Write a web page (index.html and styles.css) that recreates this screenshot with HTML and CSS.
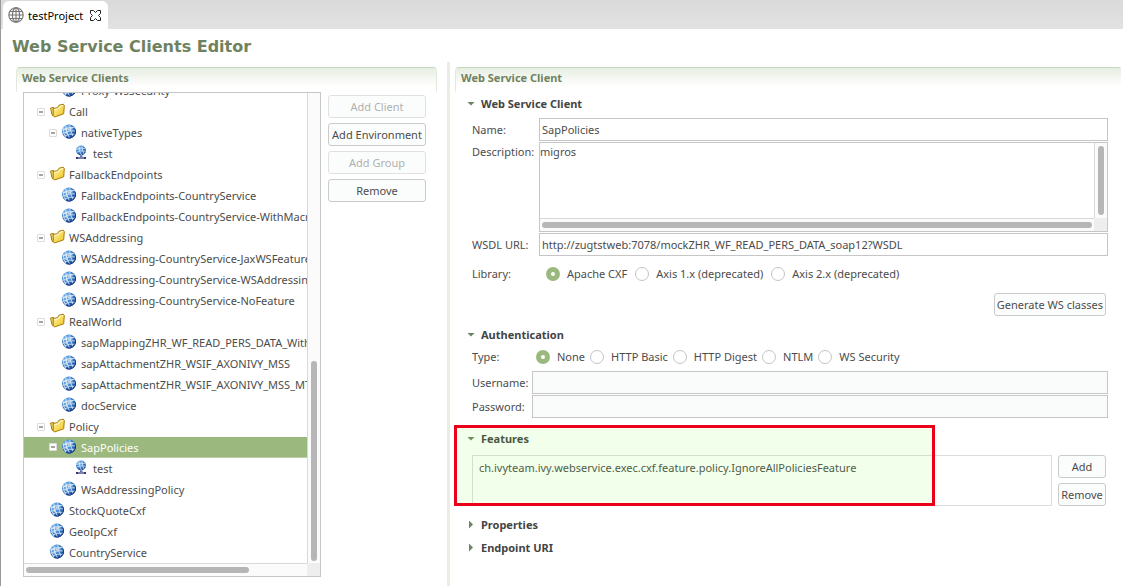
FILE: index.html
```html
<!DOCTYPE html>
<html lang="en">
<head>
<meta charset="utf-8">
<title>Web Service Clients Editor</title>
<link rel="stylesheet" href="styles.css">
</head>
<body>
<svg class="defs" aria-hidden="true">
  <defs>
    <radialGradient id="ball" cx="35%" cy="30%" r="75%">
      <stop offset="0" stop-color="#8fc4f4"/>
      <stop offset=".5" stop-color="#3f86d0"/>
      <stop offset="1" stop-color="#16408f"/>
    </radialGradient>
    <linearGradient id="gold" x1="0" y1="0" x2="1" y2="1">
      <stop offset="0" stop-color="#fff6a8"/>
      <stop offset="1" stop-color="#f0c31c"/>
    </linearGradient>
    <symbol id="globe" viewBox="0 0 15 15">
      <circle cx="7" cy="7.5" r="6.9" fill="url(#ball)"/>
      <g fill="none" stroke="#e8f2fc" stroke-width=".9" opacity=".85">
        <path d="M1 6.200Q5 3 12.100 3.400M.7 9.600Q6 6.200 13.500 6.900M2.100 12.200Q7 9.300 13 10.300M3.800 1.700Q3.800 8 7.500 14M7.700 .8Q8.100 7 11.200 12.800M1.300 4.200Q1.100 9.500 4 13.300"/>
      </g>
      <path d="M2.500 4h2v2h-2zM6 4.500h2v2H6zM3.500 8h2v2h-2zM8.500 3.500h2v2h-2z" fill="#f0efe6" opacity=".65"/>
      <path d="M13.400 5.500A6.700 6.700 0 0 1 4.500 13.700" fill="none" stroke="#143a86" stroke-width="1"/>
    </symbol>
    <symbol id="port" viewBox="0 0 15 15">
      <circle cx="7" cy="5.500" r="4.900" fill="url(#ball)"/>
      <path d="M2.500 4.500Q6.500 2.500 11 3.500M2.500 7.300Q6.500 5 11.700 6.200M5 1.300Q4.800 6 7.500 10M8 1Q8 5 10 9" fill="none" stroke="#e8f2fc" stroke-width=".8" opacity=".85"/>
      <path d="M6 10.500h2.500v1.500h-2.500z" fill="#5f6fa8"/>
      <path d="M2 12h10v2H2z" fill="#34386b"/>
      <path d="M4 13h6" stroke="#c3cbee" stroke-width="1"/>
    </symbol>
    <symbol id="folder" viewBox="0 0 15 15">
      <path d="M.6 5L3.600 4.500V12L3 13 1.800 11z" fill="#f4dc72" stroke="#a87908" stroke-width="1" stroke-linejoin="round"/>
      <path d="M3.200 5.500L7.500 4.700 9 2.200 13.300 1.200 14.300 2.500 13.700 10.800 4.400 14 3.200 12.500z" fill="url(#gold)" stroke="#a87908" stroke-width="1" stroke-linejoin="round"/>
      <path d="M4.300 6.600L8.300 5.800 9.800 3.400 13 2.600" fill="none" stroke="#fffbd5" stroke-width="1"/>
    </symbol>
  </defs>
</svg>

<div class="window">
  <header class="tabs">
    <div class="tab">
      <svg class="tab-icon" viewBox="0 0 16 16" aria-hidden="true"><g fill="none" stroke="#737373" stroke-width="1.1"><circle cx="8" cy="8" r="7.200"/><ellipse cx="8" cy="8" rx="3.600" ry="7.200"/><path d="M8 .8v14.400M1 8h14M2 4.500h12M2 11.500h12"/></g></svg>
      <span>testProject</span>
      <button class="tab-close" aria-label="Close tab"><svg viewBox="0 0 11 11"><path d="M.5.5H3.500l2 2 2-2h3v3l-2 2 2 2v3h-3l-2-2-2 2H.5v-3l2-2-2-2z" fill="#fff" stroke="#222" stroke-width="1"/></svg></button>
    </div>
  </header>
  <h1 class="title">Web Service Clients Editor</h1>

  <main class="panes">
    <section class="pane clients">
      <h2 class="pane-title">Web Service Clients</h2>
      <div class="clients-body">
        <div class="scrollbox tree">
          <ul class="rows">
            <li class="row d1"><i class="toggle none"></i><svg class="icon"><use href="#globe"/></svg>Proxy-WsSecurity</li>
            <li class="row"><i class="toggle"></i><svg class="icon"><use href="#folder"/></svg>Call</li>
            <li class="row d1"><i class="toggle"></i><svg class="icon"><use href="#globe"/></svg>nativeTypes</li>
            <li class="row d2"><i class="toggle none"></i><svg class="icon"><use href="#port"/></svg>test</li>
            <li class="row"><i class="toggle"></i><svg class="icon"><use href="#folder"/></svg>FallbackEndpoints</li>
            <li class="row d1"><i class="toggle none"></i><svg class="icon"><use href="#globe"/></svg>FallbackEndpoints-CountryService</li>
            <li class="row d1"><i class="toggle none"></i><svg class="icon"><use href="#globe"/></svg>FallbackEndpoints-CountryService-WithMacro</li>
            <li class="row"><i class="toggle"></i><svg class="icon"><use href="#folder"/></svg>WSAddressing</li>
            <li class="row d1"><i class="toggle none"></i><svg class="icon"><use href="#globe"/></svg>WSAddressing-CountryService-JaxWSFeature</li>
            <li class="row d1"><i class="toggle none"></i><svg class="icon"><use href="#globe"/></svg>WSAddressing-CountryService-WSAddressing</li>
            <li class="row d1"><i class="toggle none"></i><svg class="icon"><use href="#globe"/></svg>WSAddressing-CountryService-NoFeature</li>
            <li class="row"><i class="toggle"></i><svg class="icon"><use href="#folder"/></svg>RealWorld</li>
            <li class="row d1"><i class="toggle none"></i><svg class="icon"><use href="#globe"/></svg>sapMappingZHR_WF_READ_PERS_DATA_With</li>
            <li class="row d1"><i class="toggle none"></i><svg class="icon"><use href="#globe"/></svg>sapAttachmentZHR_WSIF_AXONIVY_MSS</li>
            <li class="row d1"><i class="toggle none"></i><svg class="icon"><use href="#globe"/></svg>sapAttachmentZHR_WSIF_AXONIVY_MSS_MTOM</li>
            <li class="row d1"><i class="toggle none"></i><svg class="icon"><use href="#globe"/></svg>docService</li>
            <li class="row"><i class="toggle"></i><svg class="icon"><use href="#folder"/></svg>Policy</li>
            <li class="row d1 selected"><i class="toggle"></i><svg class="icon"><use href="#globe"/></svg>SapPolicies</li>
            <li class="row d2"><i class="toggle none"></i><svg class="icon"><use href="#port"/></svg>test</li>
            <li class="row d1"><i class="toggle none"></i><svg class="icon"><use href="#globe"/></svg>WsAddressingPolicy</li>
            <li class="row"><i class="toggle none"></i><svg class="icon"><use href="#globe"/></svg>StockQuoteCxf</li>
            <li class="row"><i class="toggle none"></i><svg class="icon"><use href="#globe"/></svg>GeoIpCxf</li>
            <li class="row"><i class="toggle none"></i><svg class="icon"><use href="#globe"/></svg>CountryService</li>
          </ul>
          <div class="vbar end"><span class="thumb tree-v"></span></div>
          <div class="hbar"><span class="thumb tree-h"></span></div>
          <div class="corner"></div>
        </div>
        <div class="actions">
          <button class="btn" disabled>Add Client</button>
          <button class="btn">Add Environment</button>
          <button class="btn" disabled>Add Group</button>
          <button class="btn">Remove</button>
        </div>
      </div>
    </section>

    <div class="sash"></div>

    <section class="pane client">
      <h2 class="pane-title open">Web Service Client</h2>
      <div class="client-body">
        <h3 class="group"><i class="arrow"></i>Web Service Client</h3>
        <div class="form">
          <label for="name">Name:</label>
          <input class="field" id="name" type="text" value="SapPolicies">
          <label class="top" for="desc">Description:</label>
          <div class="scrollbox desc">
            <textarea id="desc">migros</textarea>
            <div class="vbar"><span class="thumb"></span></div>
            <div class="hbar"><span class="thumb"></span></div>
            <div class="corner"></div>
          </div>
          <label for="wsdl">WSDL URL:</label>
          <input class="field" id="wsdl" type="text" value="http://zugtstweb:7078/mockZHR_WF_READ_PERS_DATA_soap12?WSDL">
        </div>
        <div class="form library" role="radiogroup" aria-label="Library">
          <span>Library:</span>
          <div class="radios wide">
            <label><input type="radio" name="lib" checked>Apache CXF</label>
            <label><input type="radio" name="lib">Axis 1.x (deprecated)</label>
            <label><input type="radio" name="lib">Axis 2.x (deprecated)</label>
          </div>
        </div>
        <div class="generate"><button class="btn">Generate WS classes</button></div>

        <h3 class="group auth-title"><i class="arrow"></i>Authentication</h3>
        <div class="form auth">
          <span>Type:</span>
          <div class="radios" role="radiogroup" aria-label="Type">
            <label><input type="radio" name="type" checked>None</label>
            <label><input type="radio" name="type">HTTP Basic</label>
            <label><input type="radio" name="type">HTTP Digest</label>
            <label><input type="radio" name="type">NTLM</label>
            <label><input type="radio" name="type">WS Security</label>
          </div>
          <label for="user">Username:</label>
          <input class="field off" id="user" type="text" disabled>
          <label for="pass">Password:</label>
          <input class="field off" id="pass" type="password" disabled>
        </div>

        <div class="features">
          <h3 class="group"><i class="arrow"></i>Features</h3>
          <div class="features-body">
            <div class="list">ch.ivyteam.ivy.webservice.exec.cxf.feature.policy.IgnoreAllPoliciesFeature</div>
            <div class="list-actions">
              <button class="btn">Add</button>
              <button class="btn">Remove</button>
            </div>
          </div>
          <div class="highlight"></div>
        </div>
        <h3 class="group properties"><i class="arrow closed"></i>Properties</h3>
        <h3 class="group"><i class="arrow closed"></i>Endpoint URI</h3>
      </div>
    </section>
  </main>
</div>
</body>
</html>
```
FILE: styles.css
```css
* { box-sizing: border-box; }
body {
  margin: 0;
  font: 11px/15px "Noto Sans", sans-serif;
  color: #4c4c4c;
  background: #fff;
}
h1, h2, h3, ul { margin: 0; padding: 0; }
button, input, textarea { font: inherit; color: inherit; }
.defs { position: absolute; width: 0; height: 0; }

.window {
  height: 100vh;
  min-height: 586px;
  display: flex;
  flex-direction: column;
  border-left: 1px solid #999;
  overflow: hidden;
}
.tabs {
  display: flex;
  height: 29px;
  padding: 1px 0 0 2px;
  background: linear-gradient(#dadada, #e2e2e2);
}
.tab {
  display: flex;
  align-items: center;
  gap: 4px;
  padding: 0 7px 0 5px;
  color: #000;
  background: #fff;
  border-radius: 6px 6px 0 0;
}
.tab-icon { width: 16px; height: 16px; }
.tab-close { width: 11px; height: 11px; margin-left: 3px; padding: 0; border: 0; background: none; display: flex; }
.tab-close svg { width: 11px; height: 11px; }
.title {
  padding: 8px 11px 0;
  font: bold 16px/20px "DejaVu Sans", sans-serif;
  color: #6f8260;
}

.panes { flex: 1; min-height: 0; display: flex; margin-top: 5px; }
.pane { padding-top: 5px; display: flex; flex-direction: column; }
.clients { width: 436px; padding-left: 15px; }
.client { flex: 1; min-width: 0; padding: 5px 1px 0 5px; }
.sash { width: 3px; margin-left: 10px; background: #e9ede3; }
.pane-title {
  height: 25px;
  padding: 2px 5px;
  font-size: 11px;
  line-height: 15px;
  color: #6f8260;
  border: 1px solid;
  border-color: #c9d5bb #e3eadc transparent;
  border-radius: 4px 4px 0 0;
  background: linear-gradient(#e7eee2, #fff 80%);
  background-clip: padding-box;
}
.pane-title.open { border-right-color: transparent; }

.clients-body { flex: 1; min-height: 0; display: flex; gap: 7px; padding: 0 0 9px 7px; }
.scrollbox {
  display: grid;
  grid-template: minmax(0, 1fr) 13px / minmax(0, 1fr) 13px;
  border: 1px solid #c6c6c6;
  overflow: hidden;
}
.tree { width: 298px; }
.rows { list-style: none; overflow: hidden; }
.row:first-child { margin-top: -13px; }
.row {
  display: flex;
  align-items: center;
  height: 21px;
  padding-left: 13px;
  white-space: nowrap;
}
.row.d1 { padding-left: 25px; }
.row.d2 { padding-left: 37px; }
.row.selected { color: #fff; background: #9bb97f; border-bottom: 1px solid #b9cda6; }
.toggle {
  flex: none;
  width: 8px;
  height: 8px;
  border: 1px solid #dcdcdc;
  border-radius: 1px;
  background: linear-gradient(#a4a4a4, #a4a4a4) center / 4px 2px no-repeat #fff;
}
.toggle.none { visibility: hidden; }
.icon { flex: none; width: 15px; height: 15px; margin: 0 4px 2px 5px; }

.vbar { border-left: 1px solid #d8d8d8; background: #fbfbfb; padding: 3px; display: flex; }
.vbar.end { align-items: flex-end; padding-bottom: 2px; }
.hbar { border-top: 1px solid #d8d8d8; background: #fbfbfb; padding: 3px 2px; display: flex; }
.corner { background: #eee; }
.thumb { flex: 1; border-radius: 3px; background: #b6b6b6; }
.tree-v { height: 43%; }
.tree-h { flex: 0 0 80%; }

.actions { flex: none; width: 98px; padding-top: 3px; display: flex; flex-direction: column; gap: 5px; }
.btn {
  height: 23px;
  padding: 0 2px;
  border: 1px solid #c8cbc9;
  border-radius: 3px;
  background: #fbfdfc;
  white-space: nowrap;
}
.btn:disabled { color: #b0b0b0; border-color: #dfe2e0; }

.client-body { padding: 4px 14px 0 12px; }
.group {
  display: flex;
  align-items: center;
  gap: 6px;
  height: 15px;
  font-size: 11px;
  line-height: 15px;
  color: #444;
}
.arrow { width: 8px; height: 4px; background: #6f8260; clip-path: polygon(0 0, 100% 0, 50% 100%); }
.arrow.closed { width: 4px; height: 8px; margin: 0 2px; clip-path: polygon(0 0, 100% 50%, 0 100%); }

.form {
  display: grid;
  grid-template-columns: 67px minmax(0, 1fr);
  row-gap: 1px;
  align-items: center;
  margin: 7px 0 0 5px;
}
.form .top { align-self: start; padding-top: 2px; }
.field {
  width: 100%;
  height: 23px;
  padding: 0 2px;
  border: 1px solid #c6c6c6;
  border-radius: 0;
  background: #fff;
}
.field.off { background: #fafcfb; }
.desc { height: 90px; }
.desc textarea { width: 100%; height: 100%; padding: 1px 0; border: 0; resize: none; outline: 0; background: none; }
.library { margin-top: 10px; }
.radios { display: flex; align-items: center; gap: 5px; padding-left: 4px; }
.radios.wide { gap: 8px; padding-left: 7px; }
.radios label { display: flex; align-items: center; gap: 7px; white-space: nowrap; }
.radios input {
  appearance: none;
  width: 14px;
  height: 14px;
  margin: 0;
  border: 1px solid #c4c4c4;
  border-radius: 50%;
  background: #fff;
}
.radios input:checked { border: 5px solid #9bb97f; }
.generate { display: flex; justify-content: flex-end; padding: 12px 2px 0 0; }
.auth-title { margin-top: 11px; }
.auth { grid-template-columns: 60px minmax(0, 1fr); margin-top: 7px; }
.auth .radios { margin-bottom: 6px; }
.auth > span { margin-bottom: 6px; }

.features { position: relative; margin-top: 13px; }
.features-body { display: flex; gap: 6px; padding: 9px 2px 0 5px; }
.list { flex: 1; min-width: 0; padding: 4px 6px; border: 1px solid #dcdcdc; }
.list-actions { width: 48px; display: flex; flex-direction: column; gap: 5px; }
.highlight {
  position: absolute;
  left: -13px;
  top: -6px;
  width: 481px;
  height: 81px;
  border: 3px solid #ea0018;
  background: rgba(132, 255, 60, .1);
  pointer-events: none;
}
.properties { margin: 11px 0 8px; }
```
